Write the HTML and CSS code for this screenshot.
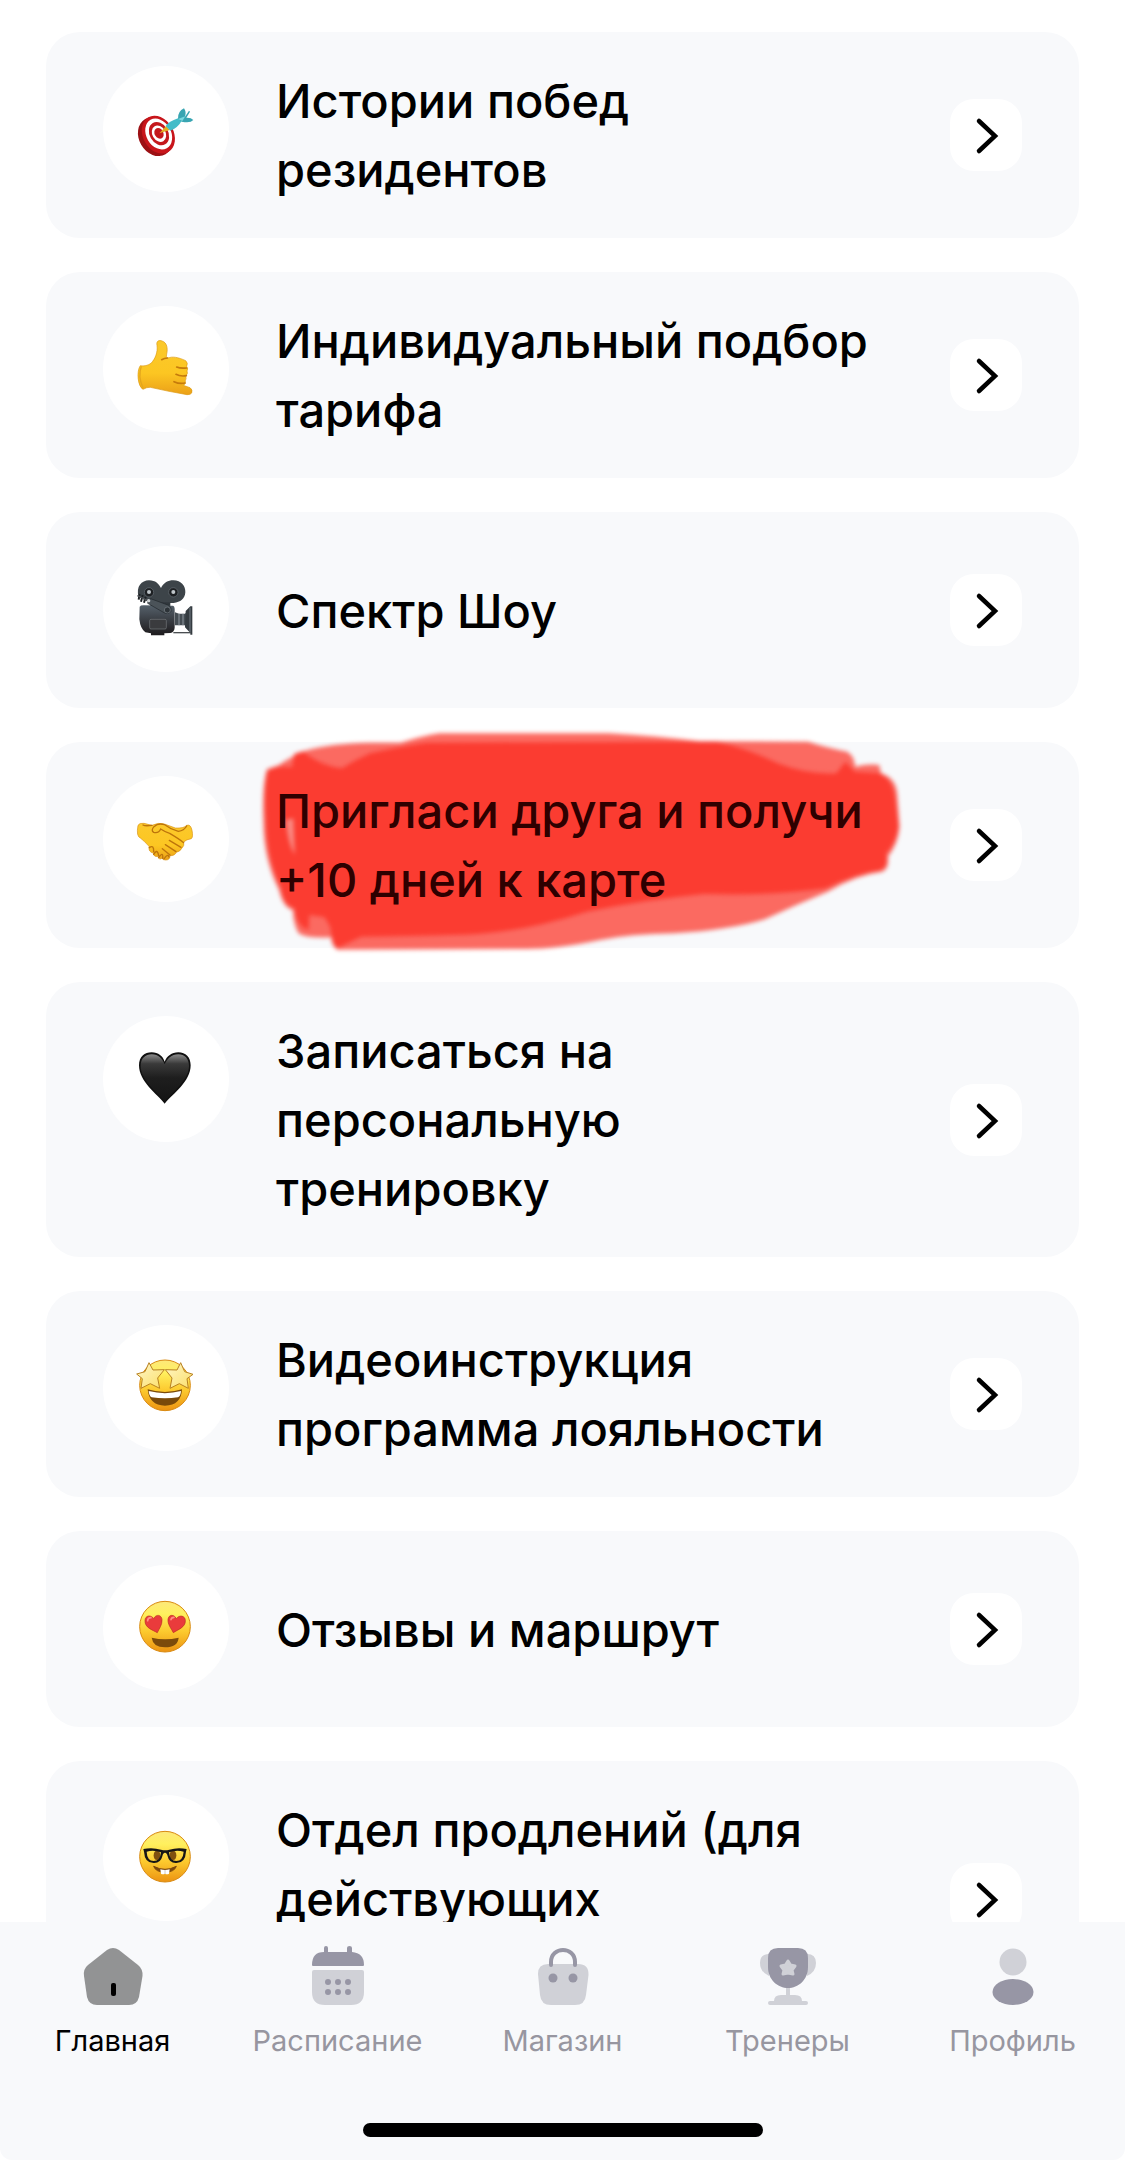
FILE: index.html
```html
<!DOCTYPE html>
<html lang="ru">
<head>
  <meta charset="UTF-8" />
  <title>Главная</title>
  <meta name="viewport" content="width=device-width, initial-scale=1.0" />
  <link rel="stylesheet" href="styles.css">
</head>
<body>
  <!-- shared gradients and symbols -->
  <svg class="defs" aria-hidden="true">
    <defs>
      <linearGradient id="face" x1="0" y1="0" x2="0" y2="1">
        <stop offset="0" stop-color="#fde87a" />
        <stop offset="0.25" stop-color="#fff05e" />
        <stop offset="0.6" stop-color="#fcc92e" />
        <stop offset="1" stop-color="#ec9312" />
      </linearGradient>
      <linearGradient id="skin" x1="0" y1="0" x2="0" y2="1">
        <stop offset="0" stop-color="#fbc92c" />
        <stop offset="0.6" stop-color="#fcc622" />
        <stop offset="1" stop-color="#eba018" />
      </linearGradient>
      <linearGradient id="metal" x1="0" y1="0" x2="0" y2="1">
        <stop offset="0" stop-color="#55606a" />
        <stop offset="1" stop-color="#1d1a1c" />
      </linearGradient>
      <linearGradient id="black" x1="0" y1="0" x2="0" y2="1">
        <stop offset="0" stop-color="#8a8a8a" />
        <stop offset="0.2" stop-color="#3a3a3a" />
        <stop offset="0.5" stop-color="#1e1e1e" />
        <stop offset="1" stop-color="#151515" />
      </linearGradient>
      <linearGradient id="gold" x1="0" y1="0" x2="1" y2="1">
        <stop offset="0" stop-color="#fff6c8" />
        <stop offset="1" stop-color="#fbe06a" />
      </linearGradient>
      <symbol id="chevron" viewBox="0 0 72 72">
        <path d="M29 22 L45 37 L29 52" fill="none" stroke="#000" stroke-width="4.500" stroke-linecap="round" />
      </symbol>
    </defs>
  </svg>

  <main class="list">
    <a class="card" href="#stories">
      <span class="card-icon">
        <svg viewBox="38 46 378 378">
          <ellipse cx="195" cy="258" rx="49" ry="61" transform="rotate(-30 195 258)" fill="#9c1014" />
          <ellipse cx="204" cy="252" rx="46" ry="60" transform="rotate(-30 204 252)" fill="#c8151b" />
          <ellipse cx="205" cy="250" rx="37" ry="49" transform="rotate(-30 205 250)" fill="#fff" />
          <ellipse cx="206" cy="249" rx="28" ry="37" transform="rotate(-30 206 249)" fill="#c4191d" />
          <ellipse cx="206" cy="249" rx="20" ry="26" transform="rotate(-30 206 249)" fill="#fff" />
          <ellipse cx="206" cy="248" rx="13" ry="17" transform="rotate(-30 206 248)" fill="#c4191d" />
          <path d="M207 248 L228 225 L238 238Z" fill="#e3ad22" />
          <path d="M226 226 Q235 213 263 203 L274 210 Q264 230 240 240Z" fill="#43bcc8" />
          <path d="M263 204 Q262 182 281 173 Q289 184 284 198 L296 180 L299 183 L288 201 Q302 200 309 208 Q300 219 274 213Z" fill="#38a5b2" />
          <path d="M263 205 L285 197 L276 211Z" fill="#78d8df" />
        </svg>
      </span>
      <span class="card-title">Истории побед резидентов</span>
      <span class="card-arrow"><svg><use href="#chevron" /></svg></span>
    </a>

    <a class="card" href="#tariff">
      <span class="card-icon">
        <svg viewBox="38 19 378 378">
          <path d="M150 198 C160 200 174 198 183 190 C194 178 203 158 200 137 C197 123 207 121 215 124 C230 128 233 147 229 163 Q226 172 232 175 C247 170 262 172 286 183 Q294 190 289 200 Q294 207 290 214 Q294 222 286 229 Q289 237 285 243 Q287 253 279 257 L299 264 Q308 270 304 280 Q300 286 290 285 L236 275 L180 263 Q170 262 158 269 C142 260 138 214 150 198Z" fill="url(#skin)" stroke="#dc9a13" stroke-width="2" />
          <path d="M231 175 Q222 176 214 180 M289 205 Q270 207 259 202 M288 228 Q270 231 257 224 M284 250 Q268 254 251 246" fill="none" stroke="#c57a0c" stroke-width="5" stroke-linecap="round" />
          <path d="M153 200 Q142 230 158 265" fill="none" stroke="#e3a61d" stroke-width="4" />
        </svg>
      </span>
      <span class="card-title">Индивидуальный подбор тарифа</span>
      <span class="card-arrow"><svg><use href="#chevron" /></svg></span>
    </a>

    <a class="card" href="#show">
      <span class="card-icon">
        <svg viewBox="38 740 378 378">
          <path d="M145 893 C136 862 154 843 176 843 C196 843 205 854 212 866 C220 850 233 843 249 843 C273 843 286 860 285 879 C284 898 270 909 250 911 L180 911Z" fill="#3d4449" />
          <circle cx="176" cy="879" r="14" fill="#1d2023" stroke="#687077" stroke-width="2" />
          <circle cx="249" cy="879" r="14" fill="#1d2023" stroke="#687077" stroke-width="2" />
          <circle cx="176" cy="878" r="6" fill="#bfc5c9" />
          <circle cx="249" cy="878" r="6" fill="#bfc5c9" />
          <path d="M180 909 H240 V922 H180Z" fill="#30373c" />
          <path d="M148 922 Q150 918 160 918 L247 919 Q253 920 253 930 V985 Q252 998 240 1001 L222 1002 V1008 H182 V1002 L165 999 Q150 988 147 960Z" fill="url(#metal)" />
          <rect x="178" y="960" width="50" height="29" rx="4" fill="#3a3b3e" stroke="#74797c" stroke-width="2" />
          <path d="M254 939 L266 943 H284 L293 934 V989 L283 978 H254Z" fill="#454d53" />
          <path d="M266 943 V978 M278 943 V978" stroke="#9098a0" stroke-width="3" />
          <path d="M286 935 L300 921 H306 V1006 H300 V1001 L284 984Z" fill="#343b40" />
          <path d="M299 925 V998" stroke="#737c83" stroke-width="3" />
          <path d="M249 1000 H302" stroke="#4b4f52" stroke-width="4" />
          <path d="M173 905 L181 898 L235 918 Q245 924 242 936 Q234 947 221 940 L172 912Z" fill="#4b5359" stroke="#20262a" stroke-width="2" />
          <circle cx="231" cy="932" r="9" fill="#2d3338" stroke="#7b848a" stroke-width="2" />
          <path d="M148 884 L145 901 M157 887 L152 907 M166 892 L161 910" stroke="#1c2023" stroke-width="6" />
          <path d="M141 889 L176 905" stroke="#505459" stroke-width="4" />
          <circle cx="175" cy="904" r="5" fill="#d3d6d8" />
        </svg>
      </span>
      <span class="card-title">Спектр Шоу</span>
      <span class="card-arrow"><svg><use href="#chevron" /></svg></span>
    </a>

    <a class="card card-marked" href="#invite">
      <!-- red marker stroke under the title -->
      <svg class="marker" viewBox="0 0 1568 780" preserveAspectRatio="none" aria-hidden="true">
        <path opacity="0.760" d="M62 178 L90 165 Q110 145 150 122 Q210 100 300 98 L370 98 Q420 78 460 70 L850 70 Q960 78 1060 94 L1310 95 Q1350 112 1400 125 Q1418 140 1418 170 Q1450 160 1474 165 L1478 190 Q1515 205 1516 260 L1521 350 Q1518 400 1494 440 Q1498 480 1478 486 Q1420 495 1355 545 Q1280 585 1210 628 Q1130 660 1000 670 Q900 672 830 690 Q730 717 660 717 L225 719 Q211 710 210 682 Q150 685 135 670 Q122 640 122 600 Q100 595 90 540 Q55 450 54 340 Q50 230 62 178Z" />
        <path d="M64 182 Q90 165 120 172 L125 132 L145 124 Q180 165 235 175 Q265 150 300 130 Q360 112 430 98 L1100 95 Q1180 120 1240 160 Q1310 195 1375 190 L1396 155 L1418 185 L1474 190 Q1508 210 1512 280 L1518 350 Q1512 400 1490 430 Q1496 470 1476 480 Q1420 490 1350 535 Q1230 558 1070 552 Q930 570 800 605 Q650 668 520 674 Q380 678 280 680 L225 714 Q212 700 208 650 L195 622 L160 615 L158 660 Q130 650 126 595 Q100 585 95 535 Q60 440 60 330 Q55 220 64 182Z" />
        <path class="marker-gap" d="M106 330 L123 325 L126 435 Q110 400 106 330Z" />
      </svg>
      <span class="card-icon">
        <svg viewBox="38 47 378 378">
          <path d="M143 195 Q147 187 161 189 L185 195 Q205 185 225 192 L255 203 Q280 205 289 195 Q301 191 305 210 Q309 230 303 235 Q288 237 280 245 Q283 256 275 263 Q269 274 258 276 Q253 287 239 286 Q239 299 226 299 Q218 299 215 294 Q205 300 203 288 Q190 291 189 278 Q174 276 176 258 Q160 240 150 233 Q137 228 143 195Z" fill="url(#skin)" stroke="#d99316" stroke-width="2" />
          <path d="M185 195 Q165 198 158 194 M190 216 Q181 210 191 199 Q203 187 223 193 Q243 208 264 213 Q281 211 289 197 M190 216 Q205 220 211 206 Q226 216 238 219 Q267 236 280 247 M237 240 L272 261 M225 253 L257 274 M216 265 L239 284 M177 262 Q191 252 190 274 M190 282 Q201 263 205 286 M205 292 Q219 271 217 294 M221 296 Q232 278 236 290" fill="none" stroke="#bd740b" stroke-width="4" stroke-linecap="round" />
        </svg>
      </span>
      <span class="card-title">Пригласи друга и получи +10 дней к карте</span>
      <span class="card-arrow"><svg><use href="#chevron" /></svg></span>
    </a>

    <a class="card" href="#personal">
      <span class="card-icon">
        <svg viewBox="38 769 378 378">
          <path d="M223 1032 C200 1003 146 966 146 917 C146 891 163 878 184 878 C204 878 218 890 223 906 C229 890 244 878 264 878 C286 878 301 893 301 917 C301 966 247 1003 223 1032Z" fill="#101010" />
          <path d="M223 1025 C200 997 151 961 151 919 C151 896 165 884 184 884 C205 884 217 898 223 914 C230 898 243 884 264 884 C283 884 296 897 296 919 C296 961 246 997 223 1025Z" fill="url(#black)" />
        </svg>
      </span>
      <span class="card-title">Записаться на персональную тренировку</span>
      <span class="card-arrow"><svg><use href="#chevron" /></svg></span>
    </a>

    <a class="card" href="#loyalty">
      <span class="card-icon">
        <svg viewBox="38 47 378 378">
          <circle cx="224" cy="228" r="76" fill="url(#face)" stroke="#d98a12" stroke-width="3" />
          <path d="M172 240 Q224 256 275 240 Q273 288 224 289 Q176 288 172 240Z" fill="#7a4a0a" />
          <path d="M175 245 Q224 258 272 245 Q271 261 263 264 Q224 270 184 264 Q176 260 175 245Z" fill="#fff" />
          <path d="M176 160 L188 182 L222 181 L202 206 L208 237 L180 223 L152 237 L156 208 L139 194 L164 187Z" fill="url(#gold)" stroke="#b98222" stroke-width="3" stroke-linejoin="round" />
          <path d="M271 160 L283 187 L308 195 L290 208 L294 237 L267 223 L239 237 L245 206 L225 181 L260 182Z" fill="url(#gold)" stroke="#b98222" stroke-width="3" stroke-linejoin="round" />
        </svg>
      </span>
      <span class="card-title">Видеоинструкция программа лояльности</span>
      <span class="card-arrow"><svg><use href="#chevron" /></svg></span>
    </a>

    <a class="card" href="#reviews">
      <span class="card-icon">
        <svg viewBox="38 769 378 378">
          <circle cx="224" cy="954" r="76" fill="url(#face)" stroke="#d98a12" stroke-width="3" />
          <path d="M201 972 C187 964 163 957 164 936 C164 919 183 918 190 930 C197 915 214 918 215 933 C216 949 206 960 201 972Z" fill="#ea3b3c" stroke="#b82d20" stroke-width="2" />
          <path d="M249 972 C242 958 232 948 233 932 C235 917 251 916 258 930 C266 918 285 920 285 936 C286 956 262 963 249 972Z" fill="#ea3b3c" stroke="#b82d20" stroke-width="2" />
          <path d="M172 936 Q172 927 182 927 M242 933 Q243 926 251 926" fill="none" stroke="#ff8d83" stroke-width="5" stroke-linecap="round" />
          <path d="M184 987 Q224 996 265 987 Q262 1016 224 1016 Q188 1016 184 987Z" fill="#7c4b0b" />
        </svg>
      </span>
      <span class="card-title">Отзывы и маршрут</span>
      <span class="card-arrow"><svg><use href="#chevron" /></svg></span>
    </a>

    <a class="card card-tall" href="#renewal">
      <span class="card-icon">
        <svg viewBox="38 45 378 378">
          <circle cx="224" cy="230" r="76" fill="url(#face)" stroke="#d98a12" stroke-width="3" />
          <ellipse cx="200" cy="226" rx="10" ry="14" fill="#80500f" />
          <ellipse cx="248" cy="226" rx="10" ry="14" fill="#80500f" />
          <path d="M159 207 Q186 201 212 209 Q224 213 237 209 Q262 201 289 207 L287 215 Q285 249 258 249 Q237 250 232 229 Q230 218 224 218 Q218 218 216 229 Q211 250 190 249 Q163 249 161 215Z M169 215 Q170 242 190 243 Q210 243 212 217 Q190 209 169 215Z M236 217 Q238 243 258 243 Q278 242 280 215 Q258 209 236 217Z" fill="#161616" fill-rule="evenodd" />
          <path d="M190 259 Q224 277 258 259 Q252 276 224 277 Q196 276 190 259Z" fill="#7d480b" stroke="#7d480b" stroke-width="3" stroke-linejoin="round" />
          <path d="M210 268 Q224 272 238 268 L236 281 Q230 285 224 281 Q217 285 212 281Z" fill="#fff" />
          <path d="M224 270 V282" stroke="#b9b0a4" stroke-width="2" />
        </svg>
      </span>
      <span class="card-title">Отдел продлений (для действующих</span>
      <span class="card-arrow"><svg><use href="#chevron" /></svg></span>
    </a>
  </main>

  <footer class="tabbar">
    <nav class="tabs">
      <a class="tab active" href="#home">
        <svg viewBox="0 0 72 72">
          <path fill="#929394" d="M30 10 Q36 6 42 10 L61 25 Q66 29 65.500 36 L62 57 Q60 65 52 65 H20 Q12 65 10 57 L7 36 Q6 29 11 25Z" />
          <rect x="34" y="43" width="5" height="13" rx="2" />
        </svg>
        <span>Главная</span>
      </a>
      <a class="tab" href="#schedule">
        <svg viewBox="0 0 72 72">
          <path class="dark" d="M10 25 Q10 12 22 12 V8 Q22 6 24 6 T26 8 V12 H45 V8 Q45 6 47.500 6 T50 8 V12 Q62 13 62 25 Q62 26 61 26 H11 Q10 26 10 25Z" />
          <path class="light" d="M10 32 Q10 30 12 30 H60 Q62 30 62 32 V52 Q62 65 49 65 H23 Q10 65 10 52Z" />
          <g class="dark">
            <circle cx="26" cy="42" r="3" /><circle cx="36" cy="42" r="3" /><circle cx="46" cy="42" r="3" />
            <circle cx="26" cy="52" r="3" /><circle cx="36" cy="52" r="3" /><circle cx="46" cy="52" r="3" />
          </g>
        </svg>
        <span>Расписание</span>
      </a>
      <a class="tab" href="#shop">
        <svg viewBox="0 0 72 72">
          <path class="light" d="M11 34 Q11 24 21 24 H51 Q62 24 61.500 35 L59 55 Q58 65 48 65 H24 Q14 65 13 55Z" />
          <path d="M24 25 V22 C24 6 48 6 48 22 V25" fill="none" stroke="#9796a5" stroke-width="4" stroke-linecap="round" />
          <circle class="dark" cx="26" cy="38" r="4.500" />
          <circle class="dark" cx="46" cy="38" r="4.500" />
        </svg>
        <span>Магазин</span>
      </a>
      <a class="tab" href="#trainers">
        <svg viewBox="0 0 72 72">
          <path class="light" d="M17 14 Q8 14 8 23 Q8 32 17 36Z M55 14 Q64 14 64 23 Q64 32 55 36Z M34 46 H38 V55 H43 Q50 55 50 61 H54 Q56 61 56 63 T54 65 H18 Q16 65 16 63 T18 61 H22 Q22 55 29 55 H34Z" />
          <path class="dark" d="M16 18 Q16 8 26 8 H46 Q56 8 56 18 V27 C56 40 46 48 36 48 S16 40 16 27Z" />
          <path fill="#d0d1d7" stroke="#d0d1d7" stroke-width="3" stroke-linejoin="round" d="M36 21 L38.500 25 L43 26 L40 30 L41 34 L36 33 L31 34 L32 30 L29 26 L33.500 25Z" />
        </svg>
        <span>Тренеры</span>
      </a>
      <a class="tab" href="#profile">
        <svg viewBox="0 0 72 72">
          <circle class="light" cx="36" cy="22" r="13.500" />
          <ellipse class="dark" cx="36" cy="52" rx="20.500" ry="13" />
        </svg>
        <span>Профиль</span>
      </a>
    </nav>
    <div class="home-indicator"></div>
  </footer>
</body>
</html>
```

FILE: styles.css
```css
* {
  box-sizing: border-box;
}

body {
  margin: 0;
  height: 100vh;
  display: flex;
  flex-direction: column;
  overflow: hidden;
  background: #fff;
  color: #000;
  font-family: Inter, "Noto Sans", sans-serif;
}

a {
  color: inherit;
  text-decoration: none;
}

svg {
  display: block;
}

.defs {
  position: absolute;
  width: 0;
  height: 0;
}

.list {
  flex: 1;
  min-height: 0;
  overflow: hidden;
  display: flex;
  flex-direction: column;
  gap: 34px;
  padding: 32px 46px 0;
}

.card {
  position: relative;
  flex-shrink: 0;
  display: flex;
  align-items: center;
  gap: 47px;
  min-height: 196px;
  padding: 34px 57px;
  border-radius: 34px;
  background: #f8f9fb;
}

.card-icon {
  align-self: flex-start;
  flex-shrink: 0;
  width: 126px;
  height: 126px;
  border-radius: 50%;
  background: #fff;
}

.card-icon svg {
  width: 100%;
  height: 100%;
}

.card-title {
  position: relative;
  flex: 1;
  font-size: 47px;
  font-weight: 500;
  line-height: 69px;
}

.card-arrow {
  flex-shrink: 0;
  width: 72px;
  height: 72px;
  border-radius: 24px;
  background: #fff;
}

.card-arrow svg {
  width: 72px;
  height: 72px;
}

.card-tall {
  min-height: 275px;
}

.card-tall .card-title {
  align-self: flex-start;
}

/* marker */
.card-marked .card-title {
  color: #2e0000;
}

.marker {
  position: absolute;
  top: -32px;
  left: 194px;
  width: 680px;
  height: 260px;
  fill: #fb3c31;
  filter: blur(2px);
}

.marker-gap {
  fill: #fa8a83;
}

/* bottom bar */
.tabbar {
  flex-shrink: 0;
  padding: 18px 0 23px;
  border-radius: 0 0 12px 12px;
  background: #f8f9fb;
}

.tabs {
  display: grid;
  grid-template-columns: repeat(5, 1fr);
}

.tab {
  display: flex;
  flex-direction: column;
  align-items: center;
  gap: 12px;
  color: #9796a0;
  font-size: 29px;
  line-height: 34px;
}

.tab svg {
  width: 72px;
  height: 72px;
}

.tab.active {
  color: #000;
}

.dark {
  fill: #9796a5;
}

.light {
  fill: #d0d1d7;
}

.home-indicator {
  width: 400px;
  height: 14px;
  margin: 65px auto 0;
  border-radius: 7px;
  background: #000;
}
```
